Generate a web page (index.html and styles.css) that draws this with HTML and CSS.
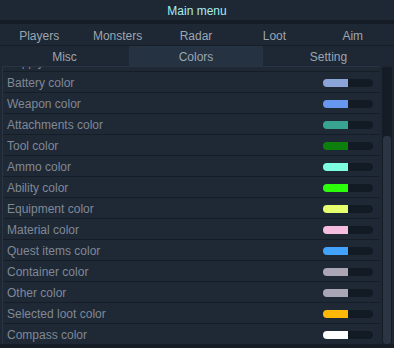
FILE: index.html
```html
<!DOCTYPE html>
<html lang="en">
  <head>
    <meta charset="UTF-8" />
    <meta name="viewport" content="width=device-width, initial-scale=1.0" />
    <title>Main menu</title>
    <link rel="stylesheet" href="styles.css">
  </head>
  <body>
    <header class="title">Main menu</header>
    <nav class="tabs tabs-main">
      <a href="#" class="tab">Players</a>
      <a href="#" class="tab">Monsters</a>
      <a href="#" class="tab">Radar</a>
      <a href="#" class="tab">Loot</a>
      <a href="#" class="tab">Aim</a>
    </nav>
    <nav class="tabs tabs-sub">
      <a href="#" class="tab">Misc</a>
      <a href="#" class="tab active">Colors</a>
      <a href="#" class="tab">Setting</a>
    </nav>
    <main class="content">
      <div class="list">
        <div class="row row-clipped"><span>Supply color</span><span class="swatch" style="--c:#c0c0c0"></span></div>
        <div class="row"><span>Battery color</span><span class="swatch" style="--c:#8ba5da"></span></div>
        <div class="row"><span>Weapon color</span><span class="swatch" style="--c:#6797ee"></span></div>
        <div class="row"><span>Attachments color</span><span class="swatch" style="--c:#38a391"></span></div>
        <div class="row"><span>Tool color</span><span class="swatch" style="--c:#0d7f0d"></span></div>
        <div class="row"><span>Ammo color</span><span class="swatch" style="--c:#7dfce0"></span></div>
        <div class="row"><span>Ability color</span><span class="swatch" style="--c:#2cff0a"></span></div>
        <div class="row"><span>Equipment color</span><span class="swatch" style="--c:#e6ff6e"></span></div>
        <div class="row"><span>Material color</span><span class="swatch" style="--c:#f7bde0"></span></div>
        <div class="row"><span>Quest items color</span><span class="swatch" style="--c:#42a3fc"></span></div>
        <div class="row"><span>Container color</span><span class="swatch" style="--c:#aaa6b5"></span></div>
        <div class="row"><span>Other color</span><span class="swatch" style="--c:#aaa6b5"></span></div>
        <div class="row"><span>Selected loot color</span><span class="swatch" style="--c:#ffb806"></span></div>
        <div class="row"><span>Compass color</span><span class="swatch" style="--c:#ffffff"></span></div>
      </div>
      <div class="scrollbar"><span class="thumb"></span></div>
    </main>
  </body>
</html>
```

FILE: styles.css
```css
html {
  font-size: 12px;
  font-family: "Liberation Sans", Arial, sans-serif;
}
body {
  margin: 0;
  background-color: #161d26;
  height: 348px;
  overflow: hidden;
}
.title {
  height: 20px;
  line-height: 23px;
  text-align: center;
  color: #a6eeee;
  background-color: #1e2734;
  border-bottom: 4px solid #151c25;
}
/************************
  TABS
************************/
.tabs {
  display: grid;
  background-color: #1e2734;
}
.tabs-main {
  grid-template-columns: repeat(5, 1fr);
  height: 21px;
  border-bottom: 1px solid #161d26;
  padding-right: 2px;
}
.tabs-sub {
  grid-template-columns: 129px 134px 1fr;
  height: 20px;
}
.tab {
  color: #9ba6b1;
  text-decoration: none;
  text-align: center;
  line-height: 22px;
}
.tabs-main .tab {
  line-height: 24px;
}
.tab.active {
  background-color: #253241;
}
/************************
  COLOR LIST
************************/
.content {
  display: flex;
  align-items: flex-start;
  background-color: #1e2734;
  height: 278px;
}
.list {
  width: 376px;
  height: 277px;
  margin-left: 2px;
  overflow: hidden;
  border-top: 1px solid #2a3442;
  border-left: 1px solid #2a3442;
  background-color: #1f2835;
}
.row {
  display: flex;
  align-items: center;
  justify-content: space-between;
  height: 19px;
  padding: 1px 6px 0 4px;
  border-bottom: 1px solid #161d27;
  color: #7f8995;
}
.row-clipped {
  margin-top: -16px;
}
.swatch {
  width: 50px;
  height: 8px;
  border-radius: 4px;
  background: linear-gradient(to right, var(--c) 50%, #121a24 50%);
}
.scrollbar {
  width: 10px;
  height: 277px;
  margin-left: 3px;
  margin-top: 1px;
  background-color: #151c26;
  border-radius: 2px;
  display: flex;
  flex-direction: column;
  justify-content: flex-end;
  align-items: center;
}
.thumb {
  width: 8px;
  height: 208px;
  border-radius: 3px;
  background-color: #2b3544;
}
```
